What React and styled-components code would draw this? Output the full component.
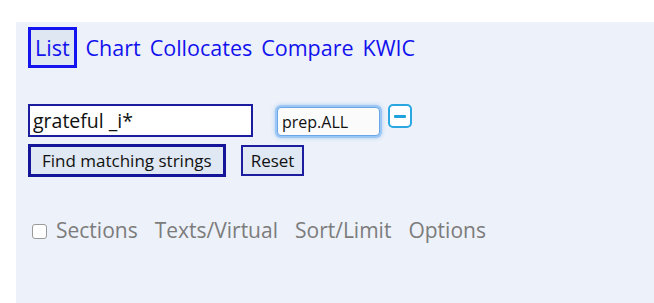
import React from 'react';
import styled, { createGlobalStyle } from 'styled-components';

const GlobalStyle = createGlobalStyle`
  body {
    margin: 0;
    background: #ffffff;
    font-family: "Open Sans", "Noto Sans", sans-serif;
  }
`;

const Page = styled.div`
  padding: 22px 0 0 16px;
`;

const Panel = styled.div`
  background: #edf1f9;
  height: 281px;
  padding: 5px 0 0 12px;
  box-sizing: border-box;
`;

const Tabs = styled.nav`
  display: flex;
  align-items: center;
  gap: 9px;
  height: 41px;
`;

const Tab = styled.a`
  font-size: 21.5px;
  color: #1212ee;
  text-decoration: none;
  line-height: 35px;
  padding: 0 ${props => (props.active ? '4px' : '0')};
  border: ${props => (props.active ? '3px solid #1414f0' : 'none')};
  background: ${props => (props.active ? '#dfe7f3' : 'transparent')};
`;

const Form = styled.div`
  display: flex;
  flex-direction: column;
  gap: 7px;
  margin-top: 36px;
`;

const Row = styled.div`
  display: flex;
  align-items: flex-start;
`;

const QueryInput = styled.input`
  width: 225px;
  height: 33px;
  box-sizing: border-box;
  border: 2px solid #1c1c9e;
  background: #fff;
  font-family: "Open Sans", sans-serif;
  font-size: 19.5px;
  color: #111;
  padding: 0 3px;
  outline: none;
`;

const TagInput = styled.input`
  width: 103px;
  height: 29px;
  box-sizing: border-box;
  margin: 3px 0 0 24px;
  border: 1px solid #6aa6e8;
  border-radius: 4px;
  box-shadow: 0 0 0 2px #9cc6f4, 0 0 4px 2px #a9cdf5;
  background: #fbfbfb;
  font-family: "Open Sans", sans-serif;
  font-size: 16px;
  color: #111;
  padding: 0 4px;
  outline: none;
`;

const MinusButton = styled.button`
  width: 24px;
  height: 24px;
  margin-left: 8px;
  box-sizing: border-box;
  border: 2px solid #2aa7e2;
  border-radius: 5px;
  background: #fff;
  padding: 0;
  display: flex;
  align-items: center;
  justify-content: center;

  &::after {
    content: '';
    width: 12px;
    height: 3px;
    border-radius: 1px;
    background: #1ea2e0;
  }
`;

const Button = styled.button`
  height: ${props => (props.primary ? '33px' : '31px')};
  margin: ${props => (props.primary ? '0' : '1px 0 0 15px')};
  box-sizing: border-box;
  border: ${props => (props.primary ? '3px solid #15159a' : '2px solid #1c1c9e')};
  background: #dfe8f3;
  font-family: "Open Sans", sans-serif;
  font-size: 17px;
  color: #111;
  padding: ${props => (props.primary ? '0 11px' : '0 8px')};
`;

const Options = styled.div`
  display: flex;
  align-items: center;
  gap: 17px;
  margin-top: 39px;
  padding-left: 4px;
`;

const Check = styled.input`
  width: 15px;
  height: 15px;
  margin: 2px -8px 0 0;
  appearance: none;
  border: 1px solid #9a9a9a;
  border-radius: 3px;
  background: #fff;
`;

const OptionLabel = styled.span`
  font-size: 21px;
  color: #7c7c7c;
`;

export default function App() {
  return (
    <Page>
      <GlobalStyle />
      <Panel>
        <Tabs>
          <Tab active>List</Tab>
          <Tab>Chart</Tab>
          <Tab>Collocates</Tab>
          <Tab>Compare</Tab>
          <Tab>KWIC</Tab>
        </Tabs>
        <Form>
          <Row>
            <QueryInput defaultValue="grateful _i*" />
            <TagInput defaultValue="prep.ALL" />
            <MinusButton aria-label="remove" />
          </Row>
          <Row>
            <Button primary>Find matching strings</Button>
            <Button>Reset</Button>
          </Row>
        </Form>
        <Options>
          <Check type="checkbox" />
          <OptionLabel>Sections</OptionLabel>
          <OptionLabel>Texts/Virtual</OptionLabel>
          <OptionLabel>Sort/Limit</OptionLabel>
          <OptionLabel>Options</OptionLabel>
        </Options>
      </Panel>
    </Page>
  );
}
